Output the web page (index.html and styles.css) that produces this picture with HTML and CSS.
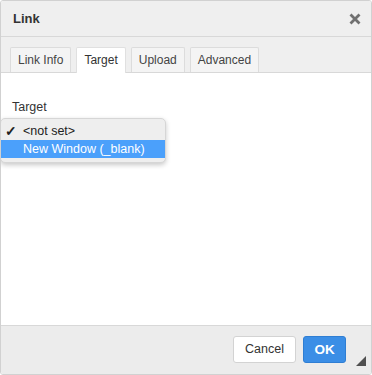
FILE: index.html
```html
<!DOCTYPE html>
<html>
<head>
<meta charset="utf-8">
<link rel="stylesheet" href="styles.css">
</head>
<body>
<div class="dialog">
  <div class="header">
    <span class="title">Link</span>
    <svg class="close" width="12" height="12" viewBox="0 0 12 12"><path d="M1.5 1.5L10.5 10.5M10.5 1.5L1.5 10.5" stroke="#707070" stroke-width="2.8" stroke-linecap="butt"/></svg>
  </div>
  <div class="tabs">
    <div class="tab">Link Info</div>
    <div class="tab active">Target</div>
    <div class="tab">Upload</div>
    <div class="tab">Advanced</div>
  </div>
  <div class="content">
    <div class="label">Target</div>
    <div class="popup">
      <div class="opt"><span class="check">✓</span>&lt;not set&gt;</div>
      <div class="opt sel"><span class="check"></span>New Window (_blank)</div>
    </div>
  </div>
  <div class="footer">
    <button class="btn cancel">Cancel</button>
    <button class="btn ok">OK</button>
    <div class="grip"></div>
  </div>
</div>
</body>
</html>
```
FILE: styles.css
```css
* { box-sizing: border-box; }
html, body { margin: 0; padding: 0; background: #fff; }
body { font-family: "Liberation Sans", Arial, sans-serif; font-size: 13px; color: #333; }
.dialog {
  width: 372px; height: 375px;
  border: 1px solid #d1d1d1;
  border-radius: 3px;
  display: flex; flex-direction: column;
  overflow: hidden;
  background: #fff;
}
.header {
  height: 36px; flex: none;
  background: #efefef;
  border-bottom: 1px solid #d8d8d8;
  display: flex; align-items: center; justify-content: space-between;
  padding: 0 10px 0 12px;
}
.title { font-weight: bold; font-size: 13px; color: #333; }
.close { display: block; }
.tabs {
  height: 36px; flex: none;
  background: #efefef;
  border-bottom: 1px solid #d8d8d8;
  display: flex; align-items: flex-end;
  padding-left: 9px; gap: 5px;
}
.tab {
  height: 25px;
  border: 1px solid #dcdcdc; border-bottom: none;
  border-radius: 2px 2px 0 0;
  background: #f4f4f4;
  padding: 0 7px;
  line-height: 24px;
  font-size: 12px; color: #444;
}
.tab.active { background: #fff; color: #333; height: 26px; margin-bottom: -1px; border-color: #e0e0e0; }
.content {
  flex: 1;
  padding: 27px 11px 0;
  position: relative;
}
.label { font-size: 12.5px; color: #333; line-height: 14px; }
.popup {
  position: absolute; left: -1px; top: 45px;
  width: 166px;
  background: #eeeeee;
  border: 1px solid #d6d6d6;
  border-radius: 5px;
  box-shadow: 0 2px 5px rgba(0,0,0,0.22);
  padding: 3px 0 4px;
}
.opt { height: 18px; line-height: 18px; font-size: 12.5px; color: #222; display: flex; }
.check { width: 22px; padding-left: 4px; font-size: 14px; font-weight: bold; }
.opt.sel { background: #4ba0fb; color: #fff; }
.footer {
  height: 49px; flex: none;
  background: #ececec;
  border-top: 1px solid #d8d8d8;
  display: flex; align-items: center; justify-content: flex-end;
  padding: 0 25px 2px 0; gap: 7px;
  position: relative;
}
.btn {
  height: 27px; border-radius: 3px;
  font-family: "Liberation Sans", Arial, sans-serif; font-size: 12.5px;
  padding: 0;
}
.cancel { width: 63px; background: #fff; border: 1px solid #d3d3d3; color: #333; }
.ok { width: 43px; background: #3b8ee6; border: 1px solid #2f7ed3; color: #fff; font-weight: bold; font-size: 13.5px; }
.grip {
  position: absolute; right: 5px; bottom: 8px;
  width: 0; height: 0;
  border-left: 10px solid transparent;
  border-bottom: 10px solid #505050;
}
```
